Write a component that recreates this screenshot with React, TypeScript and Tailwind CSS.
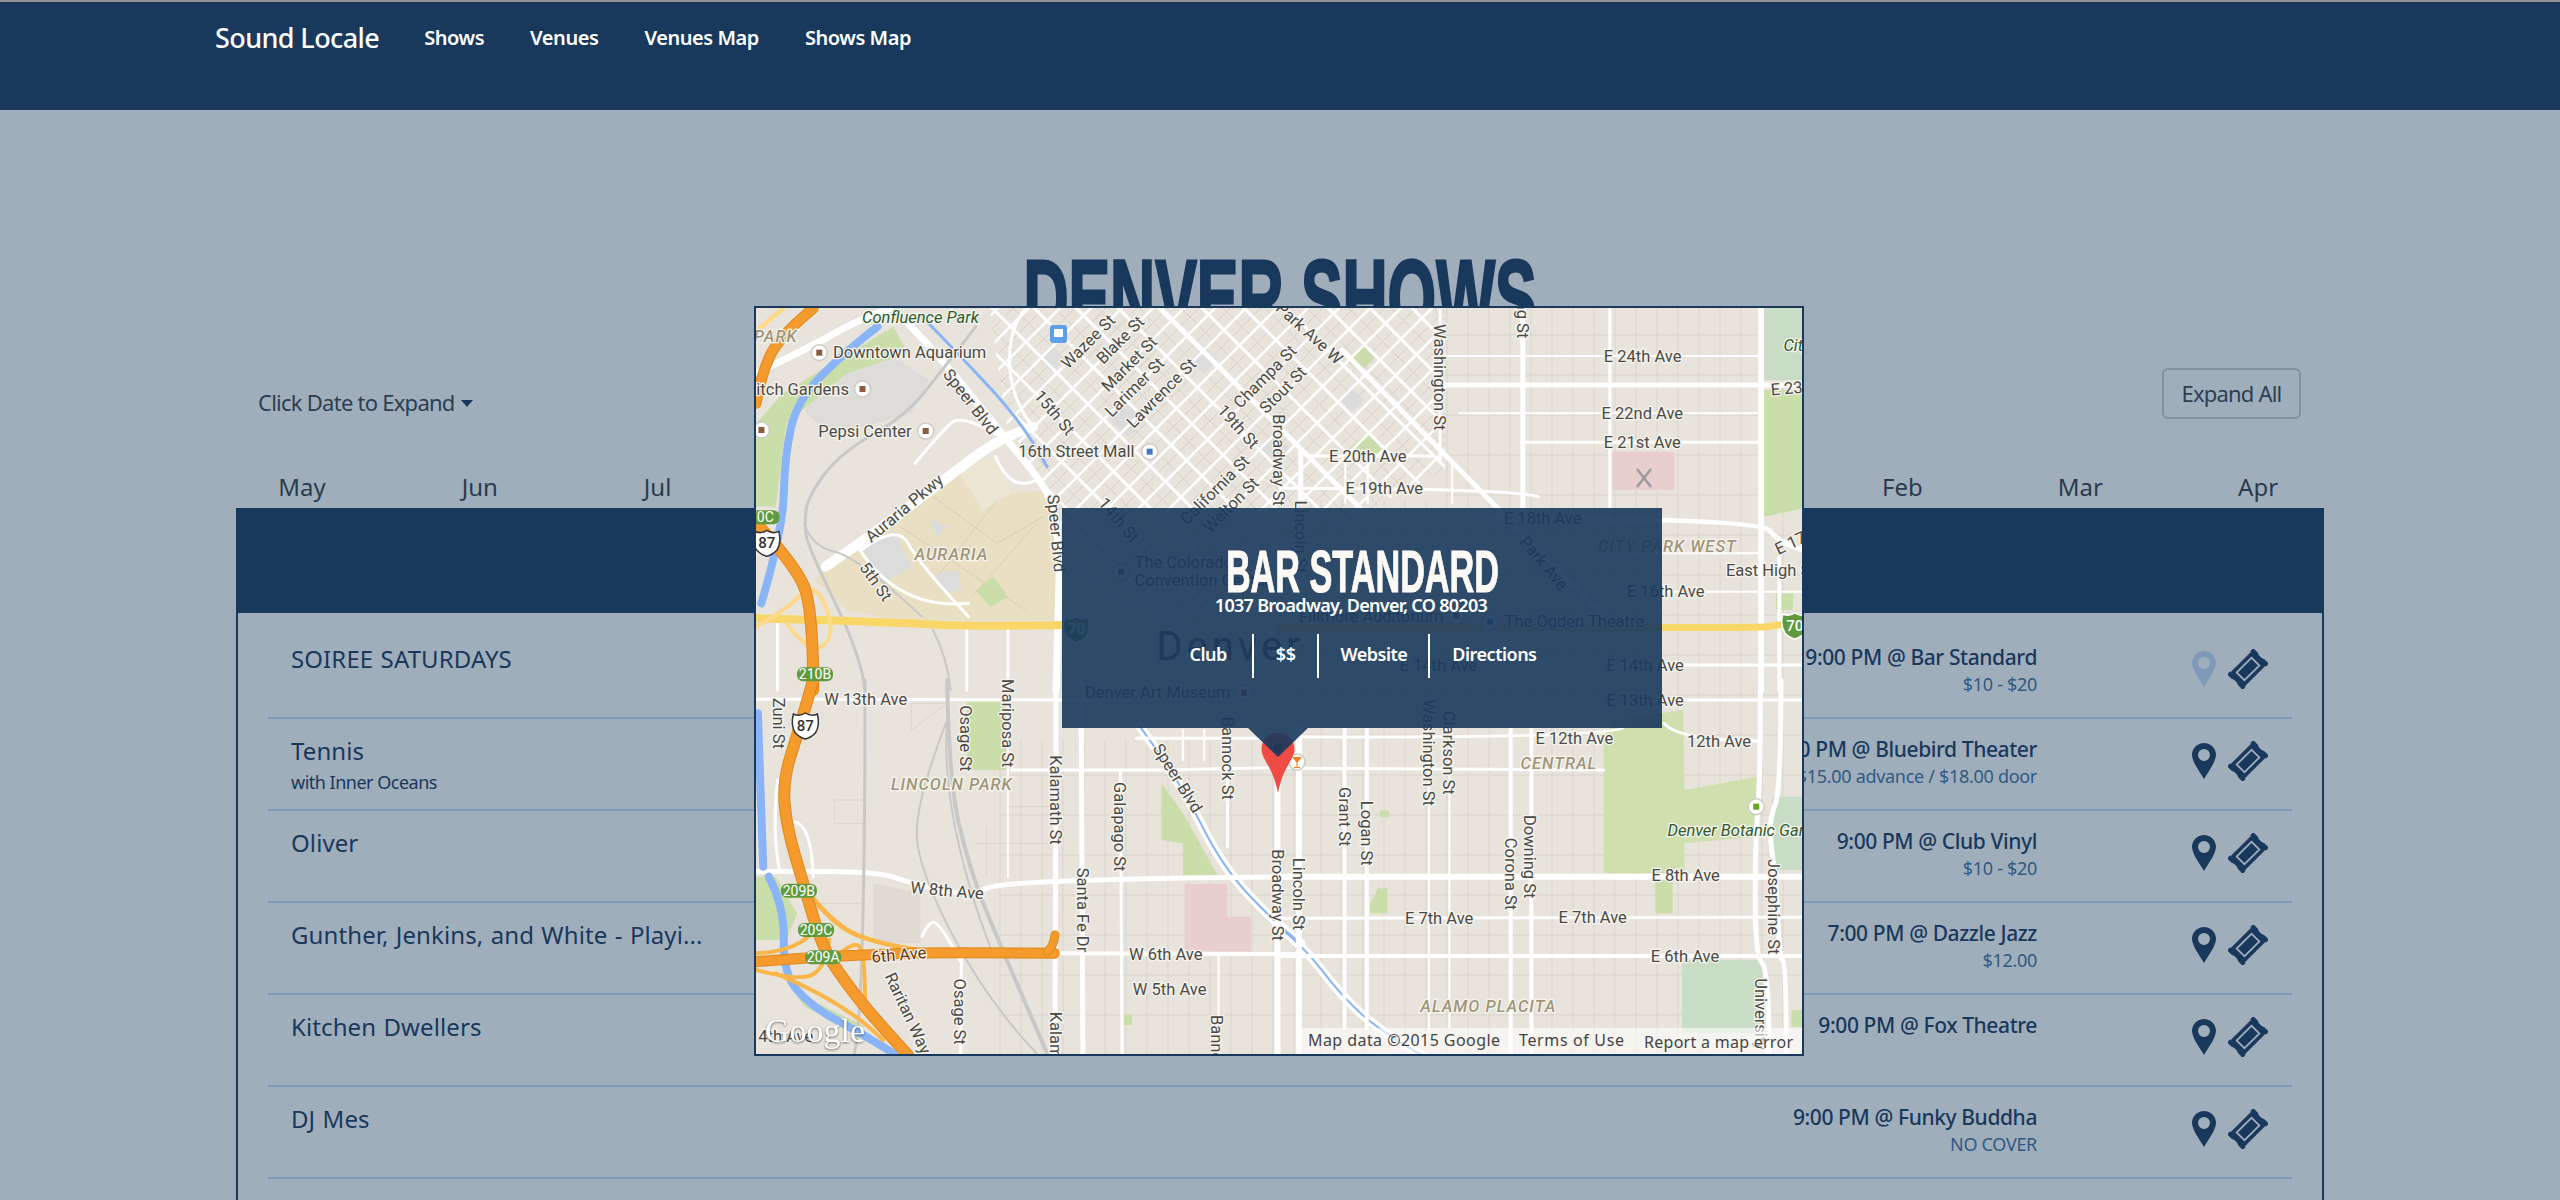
import React from 'react'

type Pt = number[]
const tl = (x: number, y: number): Pt => [740 + x / 2.8, 290 + y / 3]
const tr = (x: number, y: number): Pt => [1280 + x / 2.904, 290 + y / 3]
const bl = (x: number, y: number): Pt => [740 + x / 2.8, 680 + y / 3]
const br = (x: number, y: number): Pt => [1280 + x / 2.904, 680 + y / 3]
const quads: Record<string, (x: number, y: number) => Pt> = { tl, tr, bl, br }
const toPts = (q: string, coords: number[]) => {
  const out: Pt[] = []
  for (let i = 0; i < coords.length; i += 2) out.push(quads[q](coords[i], coords[i + 1]))
  return out
}
const line = (q: string, coords: number[]) => toPts(q, coords).map((p) => p.map((n) => n.toFixed(1)).join(',')).join(' ')
// rounded road: each inner point becomes a control point
const smooth = (q: string, coords: number[]) => {
  const p = toPts(q, coords)
  let d = `M${p[0][0].toFixed(1)} ${p[0][1].toFixed(1)}`
  for (let i = 1; i < p.length - 1; i++) {
    const mx = (p[i][0] + p[i + 1][0]) / 2
    const my = (p[i][1] + p[i + 1][1]) / 2
    d += i === p.length - 2
      ? ` Q${p[i][0].toFixed(1)} ${p[i][1].toFixed(1)} ${p[i + 1][0].toFixed(1)} ${p[i + 1][1].toFixed(1)}`
      : ` Q${p[i][0].toFixed(1)} ${p[i][1].toFixed(1)} ${mx.toFixed(1)} ${my.toFixed(1)}`
  }
  if (p.length === 2) d += ` L${p[1][0].toFixed(1)} ${p[1][1].toFixed(1)}`
  return d
}

const MONTHS = ['May', 'Jun', 'Jul', 'Aug', 'Sep', 'Oct', 'Nov', 'Dec', 'Jan', 'Feb', 'Mar', 'Apr']

const SHOWS = [
  { name: 'SOIREE SATURDAYS', sub: '', time: '9:00 PM @ Bar Standard', price: '$10 - $20', dim: true },
  { name: 'Tennis', sub: 'with Inner Oceans', time: '8:00 PM @ Bluebird Theater', price: '$15.00 advance / $18.00 door' },
  { name: 'Oliver', sub: '', time: '9:00 PM @ Club Vinyl', price: '$10 - $20' },
  { name: 'Gunther, Jenkins, and White - Playi...', sub: '', time: '7:00 PM @ Dazzle Jazz', price: '$12.00' },
  { name: 'Kitchen Dwellers', sub: '', time: '9:00 PM @ Fox Theatre', price: '' },
  { name: 'DJ Mes', sub: '', time: '9:00 PM @ Funky Buddha', price: 'NO COVER' },
]

// [quadrant, coords, fill]
const AREAS: [string, number[], string][] = [
  ['tl', [210, 870, 600, 530, 720, 500, 760, 610, 860, 600, 890, 860, 880, 990, 430, 990, 300, 960], '#e9dfc3'],
  ['tl', [600, 530, 720, 500, 760, 610, 680, 660], '#ece6d4'],
  ['tl', [530, 685, 580, 710, 550, 740], '#dcdcdc'],
  ['tl', [345, 780, 430, 720, 480, 830, 400, 880], '#dcdcdc'],
  ['tl', [550, 850, 610, 840, 620, 900, 570, 910], '#dcdcdc'],
  ['tl', [180, 360, 320, 200, 430, 200, 530, 270, 480, 370, 250, 440], '#dedcd8'],
  ['tl', [45, 400, 120, 310, 320, 180, 430, 110, 470, 190, 300, 250, 130, 400, 100, 650, 45, 650], '#c9dea8'],
  ['tl', [660, 900, 710, 860, 750, 920, 700, 950], '#c9dea8'],
  ['tr', [195, 215, 240, 165, 275, 205, 235, 245], '#c9dea8'],
  ['tr', [205, 470, 255, 430, 305, 490, 210, 490], '#c9dea8'],
  ['tr', [1405, 300, 1520, 300, 1520, 655, 1405, 680], '#c9dea8'],
  ['tr', [1405, 55, 1520, 55, 1520, 270, 1405, 270], '#c8dcc6'],
  ['tr', [1440, 910, 1490, 910, 1490, 960, 1440, 960], '#c9dea8'],
  ['tr', [965, 485, 1145, 485, 1145, 600, 965, 600], '#e8cfcd'],
  ['bl', [635, 65, 745, 65, 745, 270, 635, 270], '#c9dea8'],
  ['bl', [1180, 310, 1240, 400, 1340, 590, 1240, 590, 1240, 490, 1180, 480], '#c9dea8'],
  ['bl', [1245, 612, 1365, 612, 1365, 710, 1430, 710, 1430, 815, 1245, 815], '#e8cfcd'],
  ['bl', [375, 610, 505, 640, 505, 790, 375, 790], '#dfdbd3'],
  ['bl', [1075, 1005, 1098, 1005, 1098, 1035, 1075, 1035], '#c9dea8'],
  ['bl', [45, 590, 100, 590, 160, 700, 130, 780, 45, 780], '#c9dea8'],
  ['bl', [120, 880, 200, 960, 350, 1040, 300, 1040, 180, 980], '#c9dea8'],
  ['br', [975, 120, 1170, 90, 1175, 330, 1385, 290, 1385, 470, 1175, 490, 1175, 580, 940, 580, 940, 170], '#cfdfae'],
  ['br', [1090, 600, 1140, 600, 1140, 700, 1090, 700], '#c9dea8'],
  ['br', [285, 625, 312, 625, 312, 700, 262, 700, 262, 670], '#c9dea8'],
  ['br', [290, 392, 316, 392, 316, 412, 290, 412], '#c9dea8'],
  ['br', [1168, 840, 1400, 840, 1400, 1060, 1168, 1060], '#c8dcc6'],
  ['br', [1430, 350, 1520, 350, 1520, 570, 1420, 570], '#c8dcc6'],
  ['br', [1485, 990, 1520, 990, 1520, 1040, 1485, 1040], '#c9dea8'],
]

// [quadrant, coords, width, colour]
const ROADS: [string, number[], number, string][] = [
  // speer and parkways
  ['tl', [470, 100, 560, 200, 740, 440, 840, 570, 880, 650, 895, 800, 890, 1000, 885, 1200], 7, '#fff'],
  ['tl', [240, 830, 350, 750, 560, 580, 730, 440, 820, 410], 10, '#fff'],
  ['tl', [45, 250, 200, 170, 330, 90, 420, 55], 7, '#fff'],
  ['tl', [820, 410, 760, 330, 750, 120, 800, 55], 3, '#fff'],
  ['tl', [490, 520, 560, 430, 620, 370, 730, 440], 3, '#fff'],
  ['tl', [715, 500, 760, 610, 830, 570], 3, '#fff'],
  ['tl', [340, 780, 440, 700, 500, 820, 640, 980], 3, '#fff'],
  ['tl', [330, 770, 440, 960, 640, 940], 3, '#fff'],
  ['bl', [1120, 140, 1230, 300, 1350, 560, 1500, 730, 1570, 790], 9, '#fff'],
  ['br', [-10, 735, 70, 800, 180, 950, 300, 1060, 420, 1130], 9, '#fff'],
  ['bl', [1120, 140, 1230, 300, 1350, 560, 1500, 730, 1570, 790], 2, '#8ab4f8'],
  ['br', [-10, 735, 70, 800, 180, 950, 300, 1060, 420, 1130], 2, '#8ab4f8'],
  // west side
  ['bl', [45, 575, 370, 570, 480, 610, 640, 650, 750, 597, 1570, 590], 5, '#fff'],
  ['bl', [45, 58, 1100, 60], 3, '#fff'],
  ['bl', [760, 270, 1170, 270], 3, '#fff'],
  ['bl', [1170, 270, 1570, 262], 3, '#fff'],
  ['bl', [150, 425, 200, 430, 205, 590], 3, '#fff'],
  ['bl', [880, 820, 1570, 822], 4, '#fff'],
  ['bl', [885, 0, 882, 1120], 5, '#fff'],
  ['bl', [955, 0, 960, 1120], 5, '#fff'],
  ['bl', [750, 60, 750, 590], 2, '#fff'],
  ['bl', [1065, 270, 1070, 1120], 3, '#fff'],
  ['bl', [1365, 180, 1365, 500], 3, '#fff'],
  ['bl', [1505, 240, 1505, 1120], 6, '#fff'],
  ['bl', [1240, 150, 1240, 240], 2, '#fff'],
  ['bl', [1300, 150, 1300, 240], 2, '#fff'],
  ['bl', [1110, 175, 1570, 175], 3, '#fff'],
  ['bl', [620, 820, 618, 1120], 3, '#fff'],
  ['bl', [510, 770, 520, 740, 555, 715, 620, 850], 3, '#fff'],
  ['bl', [1340, 820, 1340, 1120], 2, '#fff'],
  ['bl', [105, 300, 90, 450, 110, 570], 3, '#fff'],
  ['tl', [635, 1000, 635, 1200], 3, '#fff'],
  ['tl', [750, 1000, 750, 1200], 3, '#fff'],
  ['tl', [105, 1000, 105, 1200], 3, '#fff'],
  // east side
  ['tr', [705, 55, 705, 700], 5, '#fff'],
  ['tr', [958, 55, 958, 700], 3, '#fff'],
  ['tr', [1397, 55, 1397, 1200], 6, '#fff'],
  ['tr', [1450, 800, 1450, 1200], 4, '#fff'],
  ['tr', [465, 60, 465, 510], 3, '#fff'],
  ['tr', [480, 198, 1397, 198], 2, '#fff'],
  ['tr', [480, 285, 1520, 285], 5, '#fff'],
  ['tr', [520, 370, 1397, 370], 2, '#fff'],
  ['tr', [710, 457, 1397, 457], 3, '#fff'],
  ['tr', [80, 498, 440, 498], 3, '#fff'],
  ['tr', [0, 595, 660, 595, 750, 620], 3, '#fff'],
  ['tr', [600, 685, 1395, 685, 1450, 760, 1520, 780], 5, '#fff'],
  ['tr', [960, 790, 1400, 790], 2, '#fff'],
  ['tr', [960, 905, 1520, 905], 2, '#fff'],
  ['tr', [1000, 1125, 1520, 1125], 3, '#fff'],
  ['tr', [180, 180, 960, 1000], 5, '#fff'],
  ['tr', [60, 480, 60, 640], 5, '#fff'],
  ['tr', [190, 500, 190, 640], 2, '#fff'],
  ['tr', [255, 500, 255, 640], 2, '#fff'],
  ['tr', [500, 510, 500, 640], 2, '#fff'],
  ['br', [1100, 60, 1520, 60], 3, '#fff'],
  ['br', [60, 170, 980, 175, 1000, 140], 3, '#fff'],
  ['br', [1115, 130, 1160, 183, 1395, 183], 3, '#fff'],
  ['br', [60, 265, 940, 270], 3, '#fff'],
  ['br', [0, 590, 1520, 590], 6, '#fff'],
  ['br', [0, 715, 1520, 712], 3, '#fff'],
  ['br', [0, 828, 1520, 828], 4, '#fff'],
  ['br', [55, 140, 55, 1120], 6, '#fff'],
  ['br', [187, 140, 187, 1045], 4, '#fff'],
  ['br', [252, 140, 252, 1045], 4, '#fff'],
  ['br', [432, 140, 432, 1045], 2, '#fff'],
  ['br', [492, 140, 492, 1045], 2, '#fff'],
  ['br', [670, 140, 670, 1120], 4, '#fff'],
  ['br', [730, 140, 730, 1120], 4, '#fff'],
  ['br', [1395, 0, 1395, 300, 1380, 480, 1380, 830, 1420, 870, 1420, 1120], 5, '#fff'],
  ['br', [1455, 0, 1455, 330, 1420, 420, 1430, 530, 1440, 590, 1450, 830, 1470, 850, 1470, 1120], 5, '#fff'],
  // rails
  ['tl', [540, 1020, 580, 1100, 590, 1200], 2, '#c8c8c6'],
  ['tl', [180, 700, 200, 770, 330, 800, 510, 980], 2, '#c8c8c6'],
  ['tl', [660, 110, 560, 250, 460, 380, 280, 490, 190, 620, 180, 700, 190, 770, 340, 1100, 350, 1200], 3, '#c8c8c6'],
  ['bl', [350, 0, 350, 1000, 320, 1120], 3, '#c8c8c6'],
  ['bl', [580, 0, 585, 300, 640, 560, 730, 800, 860, 1120], 4, '#c8c8c6'],
  ['bl', [580, 120, 490, 370, 500, 570, 690, 960, 830, 1120], 2, '#c8c8c6'],
  ['bl', [580, 120, 560, 400, 700, 800], 2, '#c8c8c6'],
  // river
  ['tl', [385, 110, 300, 180, 160, 330, 125, 500, 120, 720, 60, 940], 8, '#8ab4f8'],
  ['bl', [50, 100, 65, 560], 8, '#8ab4f8'],
  ['bl', [80, 590, 125, 680, 120, 880, 200, 980, 340, 1060, 430, 1120], 8, '#8ab4f8'],
  ['tl', [510, 80, 620, 200, 800, 410, 860, 530], 3, '#8ab4f8'],
  // colfax
  ['tl', [45, 985, 400, 995, 650, 1010, 910, 1005], 8, '#f8d768'],
  ['tr', [0, 1010, 1390, 1015, 1440, 1005, 1490, 1000], 7, '#f8d768'],
  // ramps
  ['bl', [180, 620, 240, 710, 360, 790, 530, 815], 5, '#fbb64a'],
  ['bl', [45, 870, 170, 905, 240, 860, 250, 780], 4, '#fbb64a'],
  ['bl', [270, 830, 320, 780, 350, 820, 350, 960], 4, '#fbb64a'],
  ['bl', [100, 880, 300, 970, 400, 1080], 4, '#fbb64a'],
  ['bl', [45, 820, 160, 815, 210, 750], 4, '#fbb64a'],
  ['tl', [50, 120, 120, 55], 5, '#fdd98c'],
  ['tl', [45, 1010, 130, 960, 210, 870, 270, 1030, 200, 1100, 130, 1000], 4, '#fdd98c'],
  // interstate and 6th
  ['tl', [205, 55, 110, 140, 60, 250, 45, 340], 10, '#f59a2c'],
  ['tl', [45, 700, 150, 820, 205, 950, 205, 1200], 11, '#f59a2c'],
  ['bl', [205, 0, 165, 150, 120, 300, 130, 440, 180, 620, 230, 800, 290, 900, 380, 1020, 470, 1125], 11, '#f59a2c'],
  ['bl', [45, 845, 200, 832, 360, 824, 530, 817, 880, 820], 10, '#f59a2c'],
  ['bl', [860, 815, 878, 800, 882, 765], 8, '#f59a2c'],
]

// [quadrant, x, y, text, rotation, kind, anchor]
type Label = [string, number, number, string, number?, string?, ('start' | 'end')?]
const LABELS: Label[] = [
  ['tl', 505, 82, 'Confluence Park', 0, 'g'],
  ['tl', 100, 138, 'PARK', 0, 't'],
  ['tl', 475, 188, 'Downtown Aquarium'],
  ['tl', 305, 298, 'Elitch Gardens', 0, '', 'end'],
  ['tl', 350, 425, 'Pepsi Center'],
  ['tl', 942, 485, '16th Street Mall'],
  ['tl', 645, 335, 'Speer Blvd', 52],
  ['tl', 880, 368, '15th St', 50],
  ['tl', 975, 155, 'Wazee St', -45],
  ['tl', 1065, 150, 'Blake St', -45],
  ['tl', 1090, 222, 'Market St', -45],
  ['tl', 1105, 292, 'Larimer St', -45],
  ['tl', 1180, 310, 'Lawrence St', -45],
  ['tl', 1470, 260, 'Champa St', -45],
  ['tl', 1395, 410, '19th St', 48],
  ['tl', 1330, 600, 'California St', -45],
  ['tl', 1375, 645, 'Welton St', -45],
  ['tl', 1520, 300, 'Stout St', -45],
  ['tl', 1507, 510, 'Broadway St', 90],
  ['tl', 460, 655, 'Auraria Pkwy', -40],
  ['tl', 592, 793, 'AURARIA', 0, 't'],
  ['tl', 380, 875, '5th St', 55],
  ['tl', 885, 730, 'Speer Blvd', 85],
  ['tl', 1060, 690, '14th St', 50],
  ['tl', 1105, 818, 'The Colorado', 0, '', 'start'],
  ['tl', 1105, 872, 'Convention Center', 0, '', 'start'],
  ['tr', 85, 130, 'Park Ave W', 42],
  ['tr', 60, 740, 'Lincoln St', 90],
  ['tr', 463, 262, 'Washington St', 90],
  ['tr', 705, 145, 'Downing St', 90, '', 'end'],
  ['tr', 1053, 198, 'E 24th Ave'],
  ['tr', 1425, 300, 'E 23rd Ave', -5, '', 'start'],
  ['tr', 1052, 370, 'E 22nd Ave'],
  ['tr', 1052, 457, 'E 21st Ave'],
  ['tr', 255, 500, 'E 20th Ave'],
  ['tr', 303, 595, 'E 19th Ave'],
  ['tr', 763, 685, 'E 18th Ave'],
  ['tr', 1125, 770, 'CITY PARK WEST', 0, 't'],
  ['tr', 765, 820, 'Park Ave', 50],
  ['tr', 1295, 840, 'East High School', 0, '', 'start'],
  ['tr', 1120, 905, 'E 16th Ave'],
  ['tr', 265, 978, 'Fillmore Auditorium'],
  ['tr', 855, 995, 'The Ogden Theatre'],
  ['tr', 460, 1125, 'E 14th Ave'],
  ['tr', 1060, 1125, 'E 14th Ave'],
  ['tr', 1462, 167, 'City Park', 0, 'g', 'start'],
  ['tr', 1440, 780, 'E 17th Ave', -25, '', 'start'],
  ['bl', 966, 38, 'Denver Art Museum', 0, '', 'start'],
  ['bl', 352, 58, 'W 13th Ave'],
  ['bl', 108, 130, 'Zuni St', 90],
  ['bl', 750, 130, 'Mariposa St', 90],
  ['bl', 632, 175, 'Osage St', 90],
  ['bl', 593, 312, 'LINCOLN PARK', 0, 't'],
  ['bl', 882, 360, 'Kalamath St', 90],
  ['bl', 1225, 295, 'Speer Blvd', 58],
  ['bl', 1365, 235, 'Bannock St', 90],
  ['bl', 1062, 440, 'Galapago St', 90],
  ['bl', 1505, 645, 'Broadway St', 90],
  ['bl', 958, 690, 'Santa Fe Dr', 90],
  ['bl', 580, 632, 'W 8th Ave', 5],
  ['bl', 445, 825, '6th Ave', -5, 'b'],
  ['bl', 1192, 822, 'W 6th Ave'],
  ['bl', 1203, 928, 'W 5th Ave'],
  ['bl', 470, 1000, 'Raritan Way', 65],
  ['bl', 615, 995, 'Osage St', 90],
  ['bl', 882, 995, 'Kalamath St', 90, '', 'start'],
  ['bl', 1335, 1005, 'Bannock St', 90, '', 'start'],
  ['bl', 205, 1070, 'W 4th Ave', 0, '', 'end'],
  ['br', 855, 175, 'E 12th Ave'],
  ['br', 1275, 183, '12th Ave'],
  ['br', 810, 250, 'CENTRAL', 0, 't'],
  ['br', 1060, 62, 'E 13th Ave'],
  ['br', 432, 218, 'Washington St', 90],
  ['br', 490, 218, 'Clarkson St', 90],
  ['br', 187, 410, 'Grant St', 90],
  ['br', 252, 460, 'Logan St', 90],
  ['br', 725, 530, 'Downing St', 90],
  ['br', 670, 582, 'Corona St', 90],
  ['br', 55, 642, 'Lincoln St', 90],
  ['br', 1125, 450, 'Denver Botanic Gardens', 0, 'g', 'start'],
  ['br', 1178, 587, 'E 8th Ave'],
  ['br', 462, 715, 'E 7th Ave'],
  ['br', 908, 713, 'E 7th Ave'],
  ['br', 1176, 828, 'E 6th Ave'],
  ['br', 1432, 680, 'Josephine St', 90],
  ['br', 1395, 895, 'University Blvd', 90, '', 'start'],
  ['br', 605, 980, 'ALAMO PLACITA', 0, 't'],
]

// [quadrant, x, y, mark colour]
const POIS: [string, number, number, string][] = [
  ['tl', 222, 188, '#8d5a3c'],
  ['tl', 343, 297, '#8d5a3c'],
  ['tl', 520, 423, '#8d5a3c'],
  ['tl', 60, 420, '#8d5a3c'],
  ['tl', 1147, 485, '#3f78c9'],
  ['tl', 1067, 845, '#8d5a3c'],
  ['tr', 512, 978, '#8d5a3c'],
  ['tr', 610, 995, '#3f78c9'],
  ['bl', 1411, 38, '#8d5a3c'],
  ['br', 1383, 380, '#6aa51f'],
]

const BADGES: [string, number, number, string][] = [
  ['tl', 60, 682, '70C'],
  ['tl', 210, 1153, '210B'],
  ['bl', 165, 632, '209B'],
  ['bl', 213, 750, '209C'],
  ['bl', 233, 832, '209A'],
]

function Shield({ at, label, fill, text }: { at: Pt; label: string; fill: string; text: string }) {
  const [x, y] = at
  return (
    <g transform={`translate(${x} ${y})`}>
      <path d="M-12 -11 Q-6 -8 0 -12 Q6 -8 12 -11 Q15 0 10 8 Q5 13 0 14 Q-5 13 -10 8 Q-15 0 -12 -11 Z" fill={fill} stroke={fill === '#fff' ? '#333' : '#fff'} strokeWidth="1.5" />
      <text x="0" y="6" textAnchor="middle" fontSize="15" fontWeight="500" fill={text} className="font-['Roboto',sans-serif]">{label}</text>
    </g>
  )
}

function MapDrawing() {
  const east: number[] = []
  for (let x = 1300; x < 1802; x += 21) east.push(x)
  const south: number[] = []
  for (let x = 1000; x < 1300; x += 21) south.push(x)
  const rows: number[] = []
  for (let y = 335; y < 1054; y += 40) rows.push(y)
  const famB: number[] = []
  for (let k = -2; k < 12; k++) famB.push(642 + 42 * k)
  const famA: number[] = []
  for (let k = -4; k < 16; k++) famA.push(1430 + 31 * k)
  const [pinX, pinY] = [1278, 733]

  return (
    <svg viewBox="756 308 1046 746" className="block h-full w-full bg-[#e8e4dc]">
      <defs>
        <clipPath id="downtown">
          <polygon points="990,308 1445,308 1445,470 1310,540 1180,640 1060,560 1040,480 1005,420" />
        </clipPath>
      </defs>

      {/* block lines */}
      <g stroke="#dad5cb" strokeWidth="1">
        {east.map((x) => <line key={x} x1={x} y1={x > 1440 ? 308 : 500} x2={x} y2={1054} />)}
        {south.map((x) => <line key={x} x1={x} y1={740} x2={x} y2={1054} />)}
        {rows.map((y) => <line key={y} x1={y < 500 ? 1445 : y < 740 ? 1300 : 1000} y1={y} x2={1802} y2={y} />)}
        <polyline points={line('bl', [265, 360, 350, 360, 350, 430, 265, 430, 265, 360])} fill="none" />
        <polyline points={line('bl', [480, 70, 580, 70, 480, 150, 480, 70])} fill="none" />
        <polyline points={line('bl', [660, 490, 750, 490])} fill="none" />
        <polyline points={line('bl', [690, 440, 690, 590])} fill="none" />
        <polyline points={line('bl', [750, 380, 880, 380])} fill="none" />
        <polyline points={line('bl', [750, 490, 880, 490])} fill="none" />
        <polyline points={line('bl', [220, 670, 350, 670])} fill="none" />
      </g>

      {AREAS.map(([q, c, fill], i) => <polygon key={i} points={line(q, c)} fill={fill} />)}

      <g stroke="#d8cfb6" strokeWidth="1" fill="none">
        <polyline points={line('tl', [540, 620, 720, 760, 850, 680])} />
        <polyline points={line('tl', [450, 710, 800, 960])} />
        <polyline points={line('tl', [560, 850, 720, 630])} />
        <polyline points={line('tl', [650, 920, 830, 700])} />
      </g>

      {/* downtown grid */}
      <g clipPath="url(#downtown)">
        {famB.map((c) => <line key={c} x1={c + 271} y1={250} x2={c + 871} y2={850} stroke="#d6d1c6" />)}
        {famA.map((s) => <line key={s} x1={s - 235} y1={250} x2={s - 835} y2={850} stroke="#d6d1c6" />)}
        <polygon points="1040,360 1052,348 1064,360 1052,372" fill="#dcdcdc" />
        <polygon points="1110,420 1128,402 1146,420 1128,438" fill="#dcdcdc" />
        <polygon points="1190,360 1204,346 1218,360 1204,374" fill="#dcdcdc" />
        <polygon points="1260,450 1276,434 1292,450 1276,466" fill="#dcdcdc" />
        <polygon points="1340,400 1352,388 1364,400 1352,412" fill="#dcdcdc" />
        {famB.map((c) => <line key={c} x1={c + 250} y1={250} x2={c + 850} y2={850} stroke="#fff" strokeWidth={c === 852 ? 5 : 3} />)}
        {famA.map((s) => <line key={s} x1={s - 250} y1={250} x2={s - 850} y2={850} stroke="#fff" strokeWidth="2.5" />)}
      </g>

      <g fill="none" strokeLinejoin="round" strokeLinecap="round">
        {ROADS.map(([q, c, w, col], i) => (
          <g key={i}>
            {col === '#f59a2c' && <path d={smooth(q, c)} stroke="#e2871c" strokeWidth={w + 1} />}
            <path d={smooth(q, c)} stroke={col} strokeWidth={col === '#f59a2c' ? w - 1 : w} />
          </g>
        ))}
      </g>

      {POIS.map(([q, x, y, col], i) => {
        const [cx, cy] = quads[q](x, y)
        return (
          <g key={i}>
            <circle cx={cx} cy={cy} r="8" fill="#fff" stroke="#cfcbc3" strokeWidth="1.5" />
            <rect x={cx - 3} y={cy - 3} width="6" height="6" fill={col} />
          </g>
        )
      })}
      <rect x={1050} y={325} width="17" height="18" rx="3" fill="#5c9ee8" />
      <rect x={1054} y={329} width="9" height="8" fill="#fff" />
      <g stroke="#9a9a9c" strokeWidth="2.5">
        <line x1={1637} y1={469} x2={1651} y2={487} />
        <line x1={1651} y1={469} x2={1637} y2={487} />
      </g>

      {/* cocktail bar next to the pin */}
      <circle cx={1297} cy={762} r="8" fill="#fff" stroke="#cfcbc3" strokeWidth="1.5" />
      <path d="M1292 757 h10 l-5 6 z M1296.5 762 h1 v5 h-1 z M1294 767 h6 v1 h-6 z" fill="#f0811e" />

      <g className="font-['Roboto',sans-serif]" fontSize="16.5" textAnchor="middle">
        {LABELS.map(([q, x, y, text, rot, kind, anchor], i) => {
          const [px, py] = quads[q](x, y)
          const fill = kind === 'g' ? '#2f5a2b' : kind === 't' ? '#a09679' : kind === 'b' ? '#6a3408' : '#4c4a45'
          return (
            <text
              key={i}
              transform={`translate(${px.toFixed(1)} ${py.toFixed(1)}) rotate(${rot ?? 0})`}
              y="5.5"
              textAnchor={anchor ?? 'middle'}
              fill={fill}
              stroke="#f6f4ef"
              strokeWidth="2.5"
              fontStyle={kind === 'g' || kind === 't' ? 'italic' : 'normal'}
              fontWeight={kind === 't' ? 500 : 400}
              letterSpacing={kind === 't' ? 1 : 0}
              className="[paint-order:stroke]"
            >
              {text}
            </text>
          )
        })}
        <text x="1230" y="660" fontSize="40" letterSpacing="4" fill="#4c4a45">Denver</text>
      </g>

      <Shield at={tl(75, 757)} label="87" fill="#fff" text="#333" />
      <Shield at={bl(183, 135)} label="87" fill="#fff" text="#333" />
      <Shield at={tl(942, 1015)} label="70" fill="#5f9a3c" text="#fff" />
      <Shield at={tr(1495, 1005)} label="70" fill="#5f9a3c" text="#fff" />
      {BADGES.map(([q, x, y, label]) => {
        const [cx, cy] = quads[q](x, y)
        return (
          <g key={label}>
            <rect x={cx - 18} y={cy - 7} width="36" height="14" rx="6" fill="#5f9a3c" />
            <text x={cx} y={cy + 5} textAnchor="middle" fontSize="14" fill="#fff" className="font-['Roboto',sans-serif]">{label}</text>
          </g>
        )
      })}

      {/* marker */}
      <path
        d={`M${pinX} ${pinY} c-9 0 -16.5 7 -16.5 16 c0 11 11 16 16.5 44 c5.5 -28 16.5 -33 16.5 -44 c0 -9 -7.5 -16 -16.5 -16 z`}
        fill="#ee4b45"
      />
      <circle cx={pinX} cy={pinY + 15} r="5" fill="#7d2320" />

      <text x="765" y="1042" fontSize="34" fill="#fff" className="font-['Liberation_Serif',serif] [filter:drop-shadow(0_1px_1px_rgba(0,0,0,0.55))]">Google</text>

      {/* attribution strip */}
      <rect x="1300" y="1028" width="502" height="26" fill="#fff" fillOpacity="0.6" />
      <g fontSize="16" fill="#444" className="font-['Noto_Sans',sans-serif]">
        <text x="1308" y="1046" textLength="192">Map data ©2015 Google</text>
        <text x="1519" y="1046" textLength="105">Terms of Use</text>
        <text x="1644" y="1048" textLength="149">Report a map error</text>
      </g>
    </svg>
  )
}

function Pin({ dim }: { dim?: boolean }) {
  return (
    <svg viewBox="0 0 24 36" className={`mt-[2px] h-[36px] w-[24px] ${dim ? 'text-[#7f9ab8]' : 'text-[#18385c]'}`}>
      <path
        fill="currentColor"
        fillRule="evenodd"
        d="M12 0C5.4 0 0 5.2 0 11.8 0 18.6 7.6 28.6 12 36c4.4-7.4 12-17.4 12-24.2C24 5.2 18.6 0 12 0zM12 6a6 6 0 1 1 0 12 6 6 0 0 1 0-12z"
      />
    </svg>
  )
}

function TicketIcon() {
  return (
    <svg viewBox="-20 -20 40 40" className="h-[40px] w-[40px] text-[#18385c]">
      <g transform="rotate(-45)">
        <path
          fill="currentColor"
          stroke="currentColor"
          strokeWidth="1"
          strokeLinejoin="round"
          d="M-18 -10.5 L-15 -10.5 L-14 -9.5 L14 -9.5 L15 -10.5 L18 -10.5 L18 -5 Q15.5 0 18 5 L18 10.5 L15 10.5 L14 9.5 L-14 9.5 L-15 10.5 L-18 10.5 L-18 5 Q-15.5 0 -18 -5 Z"
        />
        <rect x="-10.5" y="-5.5" width="21" height="11" fill="none" stroke="#a0aebc" strokeWidth="1.8" />
      </g>
    </svg>
  )
}

export default function App() {
  return (
    <div className="relative h-[1200px] overflow-hidden bg-[#a0aebc] font-['Noto_Sans',sans-serif]">
      <div className="h-[2px] bg-[#8d9195]" />
      <nav className="flex h-[108px] items-start bg-[#18385c] pl-[215px] pt-[16px] text-white">
        <span className="text-[27px] font-medium leading-[40px] tracking-[-0.6px]">Sound Locale</span>
        <div className="ml-[45px] flex gap-[46px] text-[20px] font-semibold leading-[40px] tracking-[-0.45px]">
          <a>Shows</a>
          <a>Venues</a>
          <a>Venues Map</a>
          <a>Shows Map</a>
        </div>
      </nav>

      <main className="mx-auto w-[2134px]">
        <h1 className="mt-[134px] flex h-[108px] justify-center font-['Liberation_Sans',sans-serif] text-[108px] font-bold leading-[108px] text-[#18385c]">
          <span className="inline-block scale-x-[0.578] whitespace-nowrap [-webkit-text-stroke:3px_#18385c]">DENVER SHOWS</span>
        </h1>

        <div className="mt-[16px] flex h-[51px] items-start justify-between pl-[45px] pr-[46px] text-[#2d3e50]">
          <span className="mt-[18px] flex items-center text-[22px] leading-[32px] tracking-[-0.75px]">
            Click Date to Expand
            <span className="ml-[6px] mt-[3px] h-0 w-0 border-x-[6px] border-t-[7px] border-x-transparent border-t-[#18385c]" />
          </span>
          <button className="h-[51px] w-[139px] rounded-[6px] border-2 border-[#84929f] text-[22px] tracking-[-0.8px]">Expand All</button>
        </div>

        <div className="mt-[51px] grid grid-cols-12 text-center text-[24px] leading-[34px] text-[#2b3b4c]">
          {MONTHS.map((m) => <span key={m}>{m}</span>)}
        </div>

        <section className="mx-[23px] mt-[4px] border-x-2 border-[#18385c]">
          <div className="-mx-[2px] h-[105px] bg-[#18385c]" />
          <div className="px-[30px] pt-[14px]">
            {SHOWS.map((s) => (
              <div key={s.time} className="flex h-[92px] border-b-2 border-[#7f9ab8]">
                <div className="flex-1 pl-[23px] pt-[15px] text-[#18385c]">
                  <div className="text-[24px] leading-[34px] tracking-[0.1px] [word-spacing:1px]">{s.name}</div>
                  {s.sub && <div className="text-[18px] leading-[28px] tracking-[-0.5px]">{s.sub}</div>}
                </div>
                <div className="pt-[13px] text-right">
                  <div className="text-[21px] font-medium leading-[34px] tracking-[-0.4px] text-[#18385c]">{s.time}</div>
                  {s.price && <div className="text-[18px] leading-[20px] tracking-[-0.3px] text-[#2f5a85]">{s.price}</div>}
                </div>
                <div className="ml-[155px] mr-[24px] flex items-start gap-[12px] pt-[22px]">
                  <Pin dim={s.dim} />
                  <TicketIcon />
                </div>
              </div>
            ))}
            <div className="h-[92px]" />
          </div>
        </section>
      </main>

      {/* map modal */}
      <div className="absolute left-[754px] top-[306px] h-[750px] w-[1050px] border-2 border-[#18385c]">
        <MapDrawing />
        <div className="absolute left-[306px] top-[200px] h-[220px] w-[600px] bg-[#18385c]/90 text-center text-white">
          <div className="mt-[33px] flex h-[62px] justify-center font-['Liberation_Sans',sans-serif] text-[59px] font-bold leading-[62px] text-[#fdfaf6]">
            <span className="inline-block scale-x-[0.58] whitespace-nowrap [-webkit-text-stroke:1px_#fdfaf6]">BAR STANDARD</span>
          </div>
          <div className="-mt-[11px] pr-[22px] text-[18px] font-semibold leading-[26px] tracking-[-0.7px]">1037 Broadway, Denver, CO 80203</div>
          <div className="mt-[16px] flex h-[44px] items-center justify-center text-[18px] font-semibold tracking-[-0.5px]">
            <span className="border-r-2 border-white pb-[4px] pl-[2px] pr-[25px] leading-[40px]">Club</span>
            <span className="border-r-2 border-white px-[22px] pb-[4px] leading-[40px]">$$</span>
            <span className="border-r-2 border-white px-[21px] pb-[4px] leading-[40px]">Website</span>
            <span className="pb-[4px] pl-[22px] leading-[40px]">Directions</span>
          </div>
          <div className="absolute left-[186px] top-full h-0 w-0 border-x-[30px] border-t-[29px] border-x-transparent border-t-[#18385c]/90" />
        </div>
      </div>
    </div>
  )
}
